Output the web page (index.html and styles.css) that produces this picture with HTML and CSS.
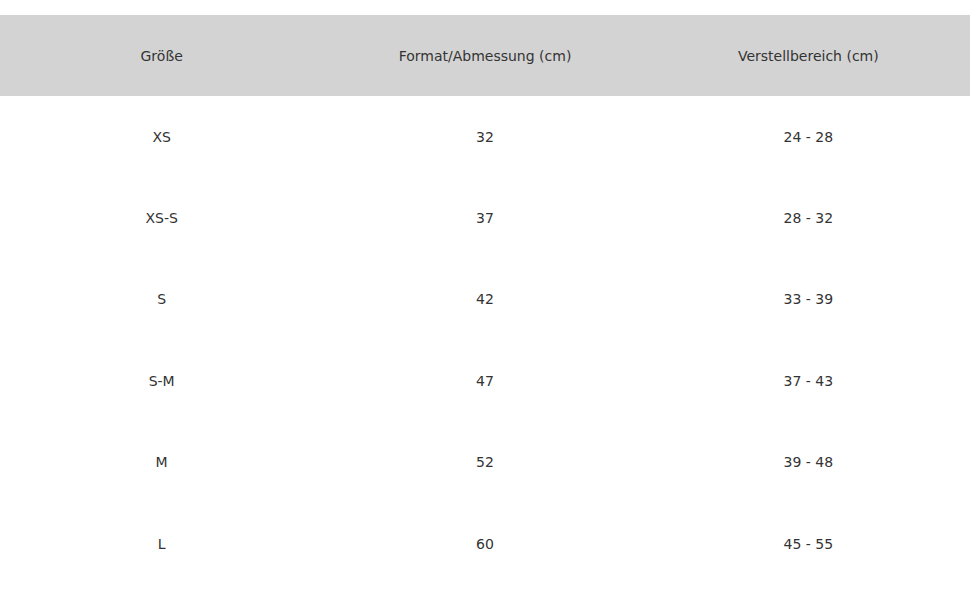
FILE: index.html
```html
<!DOCTYPE html>
<html lang="de">
<head>
<meta charset="utf-8">
<link rel="stylesheet" href="styles.css">
</head>
<body>
<table class="size-table">
  <thead>
    <tr class="head-row"><th>Größe</th><th>Format/Abmessung (cm)</th><th>Verstellbereich (cm)</th></tr>
  </thead>
  <tbody>
    <tr><td>XS</td><td>32</td><td>24 - 28</td></tr>
    <tr><td>XS-S</td><td>37</td><td>28 - 32</td></tr>
    <tr><td>S</td><td>42</td><td>33 - 39</td></tr>
    <tr><td>S-M</td><td>47</td><td>37 - 43</td></tr>
    <tr><td>M</td><td>52</td><td>39 - 48</td></tr>
    <tr><td>L</td><td>60</td><td>45 - 55</td></tr>
  </tbody>
</table>
</body>
</html>
```
FILE: styles.css
```css
html, body {
  margin: 0;
  padding: 0;
  background: #ffffff;
}
body {
  font-family: "DejaVu Sans", "Noto Sans", sans-serif;
  font-size: 14px;
  color: #333333;
}
.size-table {
  width: 100%;
  margin-top: 15px;
  border-collapse: collapse;
  table-layout: fixed;
}
.size-table th,
.size-table td {
  text-align: center;
  vertical-align: middle;
  font-weight: 400;
  padding: 0;
}
.head-row {
  background: #d3d3d3;
}
.head-row th {
  height: 81px;
}
.size-table td {
  height: 81.4px;
}
```
